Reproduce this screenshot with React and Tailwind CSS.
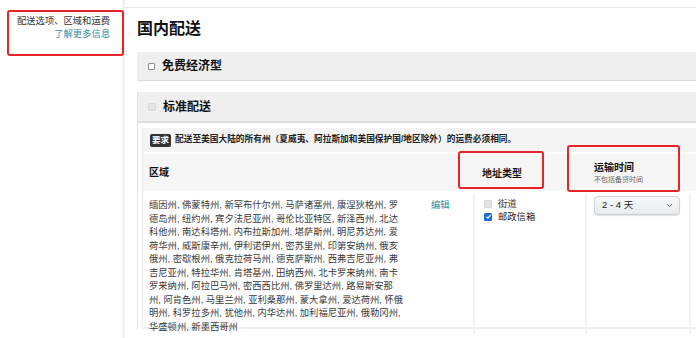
import { ChevronDown } from 'lucide-react'

const REGION_LINES = [
  '缅因州, 佛蒙特州, 新罕布什尔州, 马萨诸塞州, 康涅狄格州, 罗',
  '德岛州, 纽约州, 宾夕法尼亚州, 哥伦比亚特区, 新泽西州, 北达',
  '科他州, 南达科塔州, 内布拉斯加州, 堪萨斯州, 明尼苏达州, 爱',
  '荷华州, 威斯康辛州, 伊利诺伊州, 密苏里州, 印第安纳州, 俄亥',
  '俄州, 密歇根州, 俄克拉荷马州, 德克萨斯州, 西弗吉尼亚州, 弗',
  '吉尼亚州, 特拉华州, 肯塔基州, 田纳西州, 北卡罗来纳州, 南卡',
  '罗来纳州, 阿拉巴马州, 密西西比州, 佛罗里达州, 路易斯安那',
  '州, 阿肯色州, 马里兰州, 亚利桑那州, 蒙大拿州, 爱达荷州, 怀俄',
  '明州, 科罗拉多州, 犹他州, 内华达州, 加利福尼亚州, 俄勒冈州,',
  '华盛顿州, 新墨西哥州',
]

function Box({ checked, disabled }) {
  if (checked) {
    return (
      <span className="flex h-[8px] w-[8px] items-center justify-center rounded-[1.5px] bg-[#1a6fd8]">
        <svg viewBox="0 0 10 10" className="h-[7px] w-[7px]">
          <path d="M2 5.2 4.2 7.4 8.2 2.8" fill="none" stroke="#fff" strokeWidth="1.8" />
        </svg>
      </span>
    )
  }
  return (
    <span
      className={
        disabled
          ? 'block h-[8px] w-[8px] rounded-[1.5px] border border-[#d6d6d6] bg-[#e4e4e4]'
          : 'block h-[7px] w-[7px] rounded-[1px] border border-[#8d8d8d] bg-white'
      }
    />
  )
}

export default function App() {
  return (
    <div
      className="relative flex h-[338px] w-[696px] overflow-hidden bg-white text-[#111]"
      style={{ fontFamily: '"Liberation Sans", "Noto Sans CJK SC", sans-serif' }}
    >
      {/* sidebar */}
      <aside className="w-[125px] shrink-0 border-r-[3px] border-[#f3f3f3] pr-[12px] pt-[15px] text-right text-[9.3px] leading-[13px]">
        <p className="text-[#333]">配送选项、区域和运费</p>
        <a className="text-[#2a8ca3]">了解更多信息</a>
      </aside>

      {/* main */}
      <main className="mt-[7px] w-[660px] shrink-0 border-t border-[#e9e9e9] pl-[12px]">
        <h1 className="pt-[12px] text-[16px] font-bold leading-[18px]">国内配送</h1>

        <div className="mt-[14px] flex h-[29px] items-center gap-[7px] border-b border-[#dcdcdc] bg-[#efefef] pl-[11px]">
          <Box />
          <span className="text-[12px] font-bold">免费经济型</span>
        </div>

        <div className="mt-[11px] border-l border-[#e2e2e2]">
          <div className="flex h-[31px] items-center gap-[7px] border-b-[2px] border-[#dedede] bg-[#efefef] pl-[10px]">
            <Box disabled />
            <span className="text-[12px] font-bold">标准配送</span>
          </div>

          <div className="ml-[4px] mt-[5px] border-l border-[#ececec]">
            <div className="flex h-[24px] items-center gap-[4px] bg-[#f4f4f4] pl-[7px]">
              <span className="rounded-[2px] bg-[#333] px-[2px] text-[8.5px] font-bold leading-[13px] text-white">要求</span>
              <span className="text-[8.7px] font-bold text-[#222]">
                配送至美国大陆的所有州（夏威夷、阿拉斯加和美国保护国/地区除外）的运费必须相同。
              </span>
            </div>

            <div className="mt-[2px] grid h-[37px] grid-cols-[288px_42px_112px_104px_1fr] bg-[#f6f6f6] text-[10px] font-bold">
              <div className="flex items-center pl-[6px]">区域</div>
              <div />
              <div className="flex items-center pl-[9px] pt-[2px]">地址类型</div>
              <div className="flex flex-col justify-center pl-[9px]">
                <span className="leading-[14px]">运输时间</span>
                <span className="text-[7px] font-normal leading-[10px] text-[#666]">不包括备货时间</span>
              </div>
              <div />
            </div>

            <div className="mt-[2px] grid h-[136px] grid-cols-[288px_42px_112px_104px_1fr] border-b-[2px] border-[#efefef] text-[9.3px] text-[#3a3a3a]">
              <div className="pl-[6px] pt-[6px] leading-[13.5px]">
                {REGION_LINES.map((line) => (
                  <div key={line} className="whitespace-nowrap">{line}</div>
                ))}
              </div>
              <div className="pt-[6px] leading-[13.5px]">
                <a className="text-[#2a8ca3]">编辑</a>
              </div>
              <div className="border-l-[2px] border-[#f1f1f1] pl-[9px] pt-[5px] leading-[12.5px]">
                <label className="flex items-center gap-[6px]">
                  <Box disabled />
                  <span>街道</span>
                </label>
                <label className="flex items-center gap-[6px]">
                  <Box checked />
                  <span className="text-[#222]">邮政信箱</span>
                </label>
              </div>
              <div className="border-l-[2px] border-[#f1f1f1] pl-[7px] pt-[3px]">
                <div className="flex h-[19px] w-[86px] items-center justify-between rounded-[4px] border border-[#cdd0d4] bg-gradient-to-b from-[#f8f9fa] to-[#e8eaed] pl-[7px] pr-[5px] text-[9.5px] text-[#222] shadow-[0_1px_1px_rgba(0,0,0,0.12)]">
                  <span>2 - 4 天</span>
                  <ChevronDown size={9} strokeWidth={2.5} className="text-[#555]" />
                </div>
              </div>
              <div className="border-l-[2px] border-[#f1f1f1]" />
            </div>
          </div>
        </div>
      </main>

      {/* annotation boxes */}
      <div className="pointer-events-none absolute left-[7px] top-[10px] h-[46px] w-[117px] rounded-[3px] border-2 border-[#e8242b]" />
      <div className="pointer-events-none absolute left-[458px] top-[151px] h-[38px] w-[86px] rounded-[3px] border-2 border-[#e8242b]" />
      <div className="pointer-events-none absolute left-[567px] top-[145px] h-[47px] w-[113px] rounded-[3px] border-2 border-[#e8242b]" />
    </div>
  )
}
